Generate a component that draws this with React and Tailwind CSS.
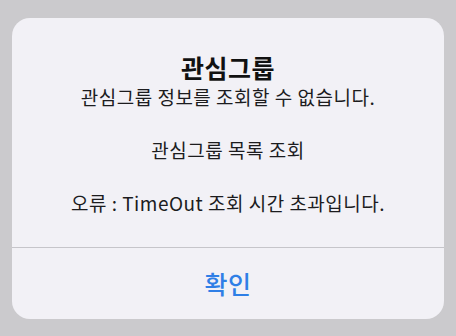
import React from "react";

const font = { fontFamily: '"Noto Sans CJK KR", "Noto Sans", sans-serif' };

export default function App() {
  const lines = [
    "관심그룹 정보를 조회할 수 없습니다.",
    "",
    "관심그룹 목록 조회",
    "",
    "오류 : TimeOut 조회 시간 초과입니다.",
  ];

  return (
    <div
      className="w-[456px] h-[336px] bg-[#cbcacd] pt-[18px] px-[12px]"
      style={font}
    >
      <div className="w-[432px] h-[301px] rounded-[18px] bg-[#f2f1f6] flex flex-col overflow-hidden">
        <div className="h-[230px] flex flex-col items-center pt-[33px] border-b border-[#c6c5ca]">
          <h2 className="text-[25px] leading-[32px] font-bold text-[#111] tracking-[0.5px]">
            관심그룹
          </h2>
          <div className="mt-[1px] text-[19px] leading-[26.5px] text-[#1c1c1e] text-center tracking-[0.5px]">
            {lines.map((l, i) => (
              <p key={i} className="h-[26.5px]">
                {l}
              </p>
            ))}
          </div>
        </div>
        <button className="flex-1 flex items-center justify-center text-[25px] font-medium text-[#2f7fe6] tracking-[0.5px]">
          확인
        </button>
      </div>
    </div>
  );
}
